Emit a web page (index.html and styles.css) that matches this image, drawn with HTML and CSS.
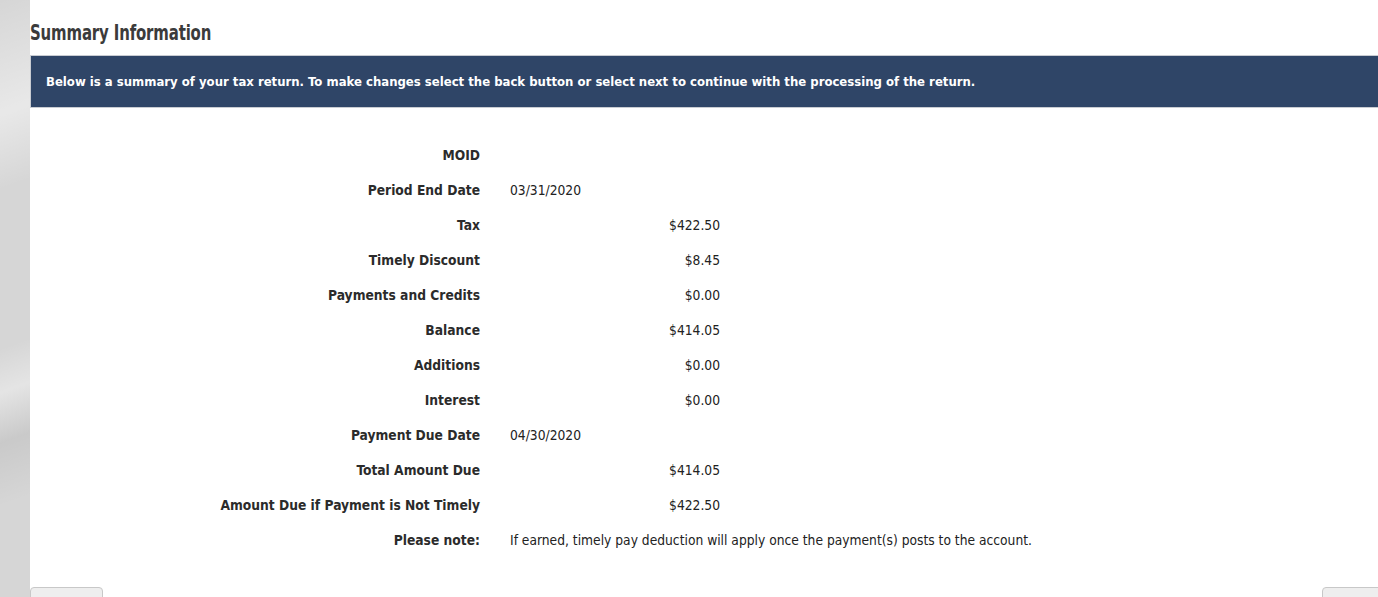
FILE: index.html
```html
<!DOCTYPE html>
<html lang="en">
<head>
<meta charset="utf-8">
<title>Summary Information</title>
<link rel="stylesheet" href="styles.css">
</head>
<body>
<div class="page">
  <aside class="side"></aside>
  <main class="main">
    <h1 class="title">Summary Information</h1>
    <div class="banner">Below is a summary of your tax return. To make changes select the back button or select next to continue with the processing of the return.</div>
    <div class="summary">
      <div class="label">MOID</div><div class="value"></div>
      <div class="label">Period End Date</div><div class="value">03/31/2020</div>
      <div class="label">Tax</div><div class="value amt">$422.50</div>
      <div class="label">Timely Discount</div><div class="value amt">$8.45</div>
      <div class="label">Payments and Credits</div><div class="value amt">$0.00</div>
      <div class="label">Balance</div><div class="value amt">$414.05</div>
      <div class="label">Additions</div><div class="value amt">$0.00</div>
      <div class="label">Interest</div><div class="value amt">$0.00</div>
      <div class="label">Payment Due Date</div><div class="value">04/30/2020</div>
      <div class="label">Total Amount Due</div><div class="value amt">$414.05</div>
      <div class="label">Amount Due if Payment is Not Timely</div><div class="value amt">$422.50</div>
      <div class="label">Please note:</div><div class="value note">If earned, timely pay deduction will apply once the payment(s) posts to the account.</div>
    </div>
    <div class="actions">
      <button class="btn btn-back" type="button">Back</button>
      <button class="btn btn-next" type="button">Next</button>
    </div>
  </main>
</div>
</body>
</html>
```

FILE: styles.css
```css
* { box-sizing: border-box; }
html, body { margin: 0; padding: 0; background: #fff; overflow: hidden; }
body { font-family: "DejaVu Sans Condensed", "DejaVu Sans", sans-serif; color: #222; }
.page { display: flex; min-height: 597px; }
.side {
  width: 30px;
  flex: none;
  background:
    linear-gradient(160deg, rgba(255,255,255,0) 0%, rgba(255,255,255,0.45) 18%, rgba(255,255,255,0) 30%, rgba(255,255,255,0) 55%, rgba(255,255,255,0.35) 62%, rgba(0,0,0,0.06) 70%, rgba(255,255,255,0) 80%),
    #d6d6d6;
}
.main { flex: 1; min-width: 0; }
.title {
  margin: 0;
  padding: 20px 0 0 0;
  height: 55px;
  font-size: 22px;
  line-height: 26px;
  font-weight: bold;
  color: #3b3b3b;
  letter-spacing: -0.2px;
  transform: scaleX(0.755);
  transform-origin: left;
}
.banner {
  background: #2f4567;
  border-top: 1px solid #c9ccd2;
  border-bottom: 1px solid #c9ccd2;
  border-left: 1px solid #c9ccd2;
  height: 53px;
  padding: 17px 0 0 15px;
  color: #fff;
  font-size: 13px;
  line-height: 18px;
  font-weight: bold;
  white-space: nowrap;
}
.summary {
  display: grid;
  grid-template-columns: 450px 210px;
  column-gap: 30px;
  grid-auto-rows: 35px;
  padding-top: 39px;
  font-size: 13.7px;
  line-height: 17px;
}
.label {
  text-align: right;
  font-weight: bold;
  color: #2b2b2b;
}
.value { color: #222; white-space: nowrap; }
.value.amt { text-align: right; }
.actions {
  display: flex;
  justify-content: space-between;
  padding-top: 20px;
}
.btn {
  height: 36px;
  border: 1px solid #c8c8c8;
  border-radius: 4px;
  background: #eeeeee;
  font-family: inherit;
  font-size: 13px;
  color: #333;
  padding: 14px 0 0 0;
}
.btn-back { width: 73px; }
.btn-next { width: 64px; margin-right: -8px; }
```
